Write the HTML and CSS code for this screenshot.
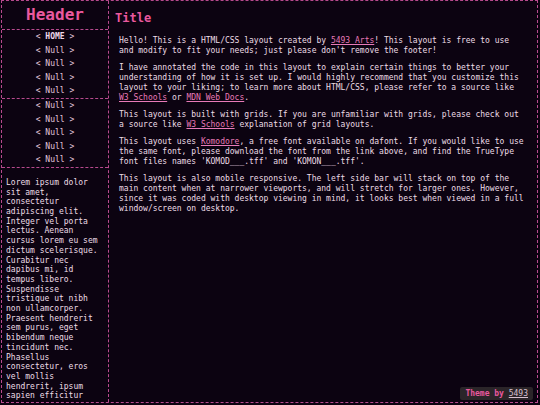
FILE: index.html
```html
<!DOCTYPE html>
<html>
<head>
<meta charset="utf-8">
<link rel="stylesheet" href="styles.css">
</head>
<body>
<div class="page">
  <aside class="sidebar">
    <header class="header">Header</header>
    <nav class="nav">
      <a class="nav-item current">&lt; <b>HOME</b> &gt;</a>
      <a class="nav-item">&lt; Null &gt;</a>
      <a class="nav-item">&lt; Null &gt;</a>
      <a class="nav-item">&lt; Null &gt;</a>
      <a class="nav-item">&lt; Null &gt;</a>
    </nav>
    <nav class="nav">
      <a class="nav-item">&lt; Null &gt;</a>
      <a class="nav-item">&lt; Null &gt;</a>
      <a class="nav-item">&lt; Null &gt;</a>
      <a class="nav-item">&lt; Null &gt;</a>
      <a class="nav-item">&lt; Null &gt;</a>
    </nav>
    <div class="blurb">Lorem ipsum dolor sit amet, consectetur adipiscing elit. Integer vel porta lectus. Aenean cursus lorem eu sem dictum scelerisque. Curabitur nec dapibus mi, id tempus libero. Suspendisse tristique ut nibh non ullamcorper. Praesent hendrerit sem purus, eget bibendum neque tincidunt nec. Phasellus consectetur, eros vel mollis hendrerit, ipsum sapien efficitur</div>
  </aside>
  <main class="main">
    <h1 class="title">Title</h1>
    <p>Hello! This is a HTML/CSS layout created by <a href="#">5493 Arts</a>! This layout is free to use and modify to fit your needs; just please don't remove the footer!</p>
    <p>I have annotated the code in this layout to explain certain things to better your understanding of how it is set up. I would highly recommend that you customize this layout to your liking; to learn more about HTML/CSS, please refer to a source like <a href="#">W3 Schools</a> or <a href="#">MDN Web Docs</a>.</p>
    <p>This layout is built with grids. If you are unfamiliar with grids, please check out a source like <a href="#">W3 Schools</a> explanation of grid layouts.</p>
    <p>This layout uses <a href="#">Komodore</a>, a free font available on dafont. If you would like to use the same font, please download the font from the link above, and find the TrueType font files names 'KOMOD___.tff' and 'KOMON___.tff'.</p>
    <p>This layout is also mobile responsive. The left side bar will stack on top of the main content when at narrower viewports, and will stretch for larger ones. However, since it was coded with desktop viewing in mind, it looks best when viewed in a full window/screen on desktop.</p>
  </main>
  <footer class="credit">Theme by <a href="#">5493</a></footer>
</div>
</body>
</html>
```

FILE: styles.css
```css
html, body {
  margin: 0;
  padding: 0;
  background: #0c0311;
}
body {
  font-family: "DejaVu Sans Mono", "Liberation Mono", monospace;
  font-size: 8px;
  color: #ecdde6;
  overflow: hidden;
}
.page {
  position: relative;
  box-sizing: border-box;
  height: 403px;
  margin: 0 2px 0 1px;
  border: 1px dashed #b84a8e;
  display: grid;
  grid-template-columns: 107px 1fr;
  overflow: hidden;
}
.sidebar {
  border-right: 1px dashed #b84a8e;
  display: flex;
  flex-direction: column;
  min-height: 0;
  overflow: hidden;
}
.header {
  height: 28px;
  line-height: 28px;
  border-bottom: 1px dashed #b84a8e;
  text-align: center;
  color: #ea589e;
  font-size: 16px;
  font-weight: bold;
}
.nav {
  display: flex;
  flex-direction: column;
  border-bottom: 1px dashed #b84a8e;
}
.nav-item {
  display: block;
  height: 13.6px;
  line-height: 13.6px;
  text-align: center;
  color: #e6c8de;
  text-decoration: none;
}
.nav-item b {
  font-weight: bold;
  color: #f0d8ea;
}
.blurb {
  padding: 10px 4px 0 4px;
  line-height: 9.7px;
  color: #ecdde6;
}
.main {
  padding: 10px 11px 10px 10px;
  min-width: 0;
}
.title {
  margin: 0 0 10px -4px;
  font-size: 12px;
  line-height: 15px;
  color: #ea589e;
  font-weight: bold;
}
.main p {
  margin: 0 0 7px 0;
  line-height: 10px;
}
.main a {
  color: #e87ab8;
  text-decoration: underline;
}
.credit {
  position: absolute;
  right: 4px;
  bottom: 2px;
  padding: 2px 5px;
  background: #2b2529;
  border-radius: 2px;
  color: #e8589e;
  font-weight: bold;
  line-height: 9px;
}
.credit a {
  color: #d8c0cf;
  font-weight: normal;
  text-decoration: underline;
}
```
